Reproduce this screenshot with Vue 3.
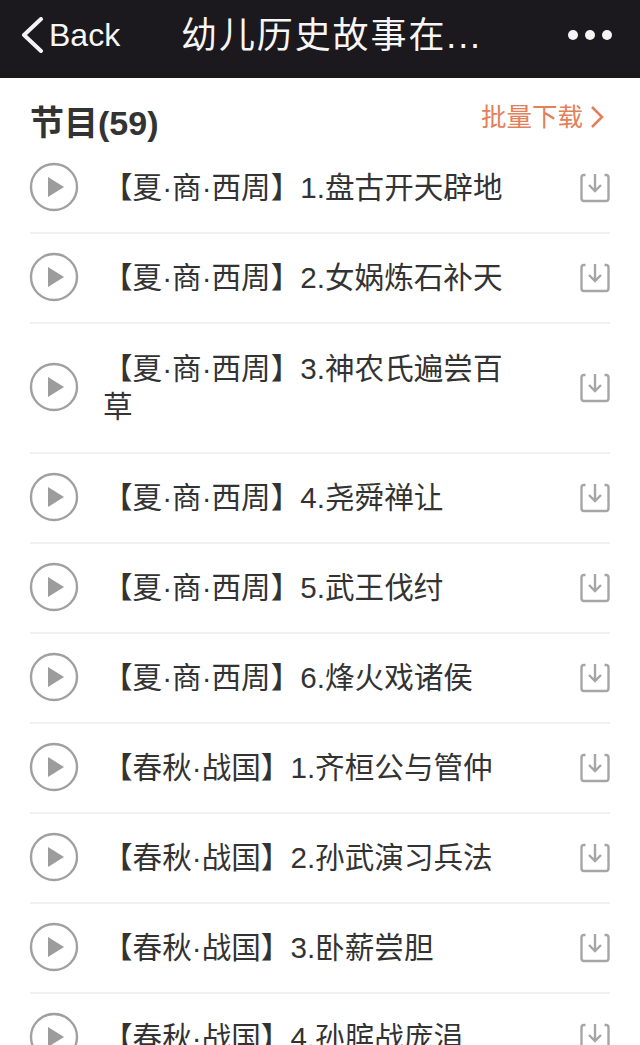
<template>
  <div class="page">
    <header class="topbar">
      <div class="back">
        <svg class="back-icon" width="24" height="36" viewBox="0 0 24 36">
          <path d="M21 2 L4 18 L21 34" fill="none" stroke="#f4f4f4" stroke-width="4" stroke-linecap="round" stroke-linejoin="round" />
        </svg>
        <span>Back</span>
      </div>
      <div class="title">幼儿历史故事在...</div>
      <div class="more">
        <i></i><i></i><i></i>
      </div>
    </header>

    <section class="list-head">
      <h2>节目(59)</h2>
      <a class="batch">
        批量下载
        <svg width="14" height="24" viewBox="0 0 14 24">
          <path d="M2 2 L12 12 L2 22" fill="none" stroke="#e2805a" stroke-width="2.6" />
        </svg>
      </a>
    </section>

    <ul class="list">
      <li v-for="item in items" :key="item" class="row" :class="{ long: item.length > 16 }">
        <svg class="play" width="50" height="50" viewBox="0 0 50 50">
          <circle cx="25" cy="25" r="23" fill="none" stroke="#a0a0a0" stroke-width="2.4" />
          <path d="M19 15 L35 25 L19 35 Z" fill="#9c9c9c" />
        </svg>
        <div class="name">{{ item }}</div>
        <svg class="down" width="30" height="30" viewBox="0 0 30 30">
          <path d="M5.5 2 H4 Q1.5 2 1.5 4.5 V25.5 Q1.5 28 4 28 H26 Q28.5 28 28.5 25.5 V4.5 Q28.5 2 26 2 H24.5" fill="none" stroke="#a6a6a6" stroke-width="2.4" />
          <path d="M15 1 V18 M9 12 L15 18 L21 12" fill="none" stroke="#a6a6a6" stroke-width="2.4" />
        </svg>
      </li>
    </ul>
  </div>
</template>

<script setup>
const items = [
  '【夏·商·西周】1.盘古开天辟地',
  '【夏·商·西周】2.女娲炼石补天',
  '【夏·商·西周】3.神农氏遍尝百草',
  '【夏·商·西周】4.尧舜禅让',
  '【夏·商·西周】5.武王伐纣',
  '【夏·商·西周】6.烽火戏诸侯',
  '【春秋·战国】1.齐桓公与管仲',
  '【春秋·战国】2.孙武演习兵法',
  '【春秋·战国】3.卧薪尝胆',
  '【春秋·战国】4.孙膑战庞涓'
]
</script>

<style>
html, body {
  margin: 0;
  background: #fff;
}
</style>

<style scoped>
.page {
  width: 640px;
  height: 1045px;
  overflow: hidden;
  background: #fff;
  font-family: "Liberation Sans", "Noto Sans CJK SC", sans-serif;
  color: #333;
}

.topbar {
  height: 78px;
  box-sizing: border-box;
  padding: 0 28px 8px 20px;
  display: flex;
  align-items: center;
  background: #1b191d;
  color: #f6f6f6;
}

.back {
  width: 161px;
  display: flex;
  align-items: center;
  gap: 5px;
  font-size: 32px;
}

.title {
  flex: 1;
  margin-bottom: 6px;
  font-size: 36px;
  letter-spacing: 1.9px;
  white-space: nowrap;
}

.more {
  display: flex;
  gap: 7px;
}

.more i {
  width: 10px;
  height: 10px;
  border-radius: 50%;
  background: #f4f4f4;
}

.list-head {
  height: 66px;
  box-sizing: border-box;
  padding: 20px 36px 0 30px;
  display: flex;
  justify-content: space-between;
  align-items: flex-start;
}

.list-head h2 {
  margin: 0;
  font-size: 34px;
  line-height: 50px;
  font-weight: 700;
}

.batch {
  display: flex;
  align-items: center;
  gap: 7px;
  font-size: 25.5px;
  line-height: 38px;
  color: #e2805a;
}

.list {
  list-style: none;
  margin: 0;
  padding: 0 30px;
}

.row {
  height: 90px;
  box-sizing: border-box;
  display: flex;
  align-items: center;
  border-bottom: 2px solid #f1f1f1;
}

.row.long {
  height: 130px;
}

.play {
  flex: none;
  margin-left: -1px;
  margin-bottom: 2px;
}

.name {
  width: 418px;
  margin-left: 24px;
  font-size: 29.6px;
  line-height: 38px;
  color: #333;
}

.down {
  flex: none;
  margin-left: auto;
}
</style>
